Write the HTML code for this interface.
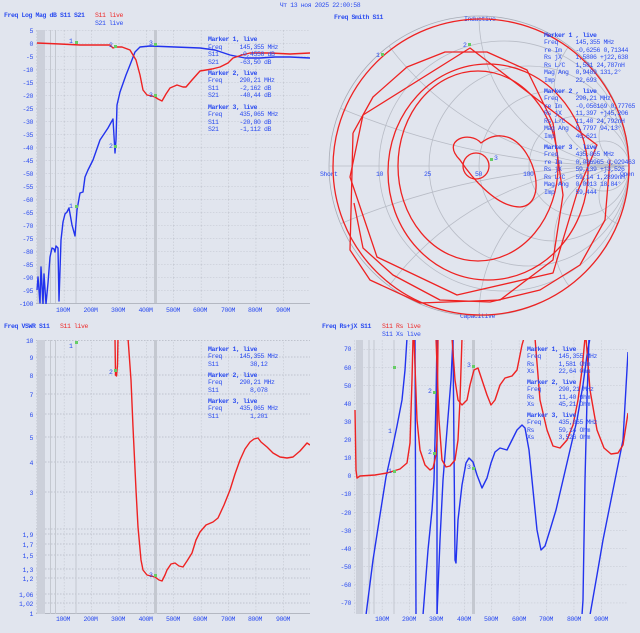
<!DOCTYPE html>
<html><head><meta charset="utf-8"><style>
html,body{margin:0;padding:0;background:#e1e5ee;overflow:hidden;width:640px;height:633px}
svg{display:block}
text{font-family:"Liberation Mono","DejaVu Sans Mono",monospace;font-size:6.5px;letter-spacing:-0.4px;fill:#2b4cf0;white-space:pre}
.b{font-weight:bold}
.r{fill:#ee2a2a}
.ax{text-anchor:end}
.fx{text-anchor:middle}
</style></head><body>
<svg width="640" height="633" viewBox="0 0 640 633" xmlns="http://www.w3.org/2000/svg">
<defs>
<pattern id="g1" patternUnits="userSpaceOnUse" x="36.5" y="30.5" width="27.4" height="13"><path d="M0 0H27.4M0 0V13" stroke="#b4b8c2" stroke-width="0.8" stroke-dasharray="1.5,1.5" fill="none"/></pattern>
<pattern id="gv" patternUnits="userSpaceOnUse" x="36.5" y="0" width="27.4" height="633"><path d="M0 0V633" stroke="#b4b8c2" stroke-width="0.8" stroke-dasharray="1.5,1.5"/></pattern>
<pattern id="g4" patternUnits="userSpaceOnUse" x="354.5" y="476" width="27.4" height="18.1"><path d="M0 0H27.4M0 0V18.1" stroke="#b4b8c2" stroke-width="0.8" stroke-dasharray="1.5,1.5" fill="none"/></pattern>
<clipPath id="c1"><rect x="36" y="30" width="274" height="274"/></clipPath>
<clipPath id="c3"><rect x="36" y="340" width="274" height="274"/></clipPath>
<clipPath id="c4"><rect x="354" y="340" width="274" height="274"/></clipPath>
<clipPath id="cs"><circle cx="479" cy="166" r="150"/></clipPath>
</defs>
<rect width="640" height="633" fill="#e1e5ee"/>
<text x="320" y="7" class="fx">Чт 13 ноя 2025 22:00:58</text>

<!-- PANEL 1 -->
<text x="4" y="17" class="b">Freq Log Mag dB S11 S21</text>
<text x="95" y="17" class="r">S11 live</text>
<text x="95" y="25">S21 live</text>
<rect x="36" y="30" width="274" height="274" fill="url(#g1)"/>
<rect x="37" y="30" width="8" height="274" fill="#ccd0da"/>
<g stroke="#c4c8d0" stroke-width="1"><path d="M50.5 30V304M55.5 30V304M76 30V304"/></g>
<rect x="154" y="30" width="3" height="274" fill="#c4c8d0"/>
<line x1="36" y1="303.5" x2="310" y2="303.5" stroke="#b4b8c2"/>
<text x="33" y="33" class="ax">5</text><text x="33" y="46" class="ax">0</text><text x="33" y="59" class="ax">-5</text><text x="33" y="72" class="ax">-10</text><text x="33" y="85" class="ax">-15</text><text x="33" y="98" class="ax">-20</text><text x="33" y="111" class="ax">-25</text><text x="33" y="124" class="ax">-30</text><text x="33" y="137" class="ax">-35</text><text x="33" y="150" class="ax">-40</text><text x="33" y="163" class="ax">-45</text><text x="33" y="176" class="ax">-50</text><text x="33" y="189" class="ax">-55</text><text x="33" y="202" class="ax">-60</text><text x="33" y="215" class="ax">-65</text><text x="33" y="228" class="ax">-70</text><text x="33" y="241" class="ax">-75</text><text x="33" y="254" class="ax">-80</text><text x="33" y="267" class="ax">-85</text><text x="33" y="280" class="ax">-90</text><text x="33" y="293" class="ax">-95</text><text x="33" y="306" class="ax">-100</text>
<text x="63" y="312" class="fx">100M</text><text x="90.5" y="312" class="fx">200M</text><text x="118" y="312" class="fx">300M</text><text x="145.5" y="312" class="fx">400M</text><text x="173" y="312" class="fx">500M</text><text x="200" y="312" class="fx">600M</text><text x="228" y="312" class="fx">700M</text><text x="255" y="312" class="fx">800M</text><text x="283" y="312" class="fx">900M</text>
<g clip-path="url(#c1)" fill="none" stroke-width="1.4" stroke-linejoin="round">
<polyline stroke="#2233ee" points="37,290 38,277 40,303 41,267 43,304 44,274 46,304 48,283 50,257 52,248 54,249 55,252 56,246 58,248 59,301 61,240 63,222 65,214 67,212 69,208 72,225 75,236 77,210 80,193 83,192 85,177 88,170 93,160 100,140 108,128 113,119 115,153 116,140 117,105 120,92 126,75 130,65 135,52 140,47 150,46 200,48 215,50 230,55 245,58 260,58 275,57 290,57 310,58"/>
<polyline stroke="#ee2222" points="37,43 60,44 80,45 110,45 113,48 116,47 122,47 130,50 136,60 140,75 143,90 147,95 152,96 155,97 158,99 162,101 166,94 170,88 177,85 183,87 186,87 192,80 200,71 212,69 220,67 228,63 233,58 242,55 250,53 270,53 290,54 310,53"/>
</g>
<g fill="#66cc66"><rect x="75" y="41" width="3" height="3"/><rect x="114" y="45" width="3" height="3"/><rect x="154" y="43" width="3" height="3"/><rect x="154" y="94" width="3" height="3"/><rect x="114" y="145" width="3" height="3"/><rect x="75" y="205" width="3" height="3"/></g>
<text x="69" y="43">1</text><text x="109" y="47">2</text><text x="149" y="45">3</text><text x="149" y="97">3</text><text x="109" y="148">2</text><text x="69" y="208">1</text>
<text x="208" y="41" class="b">Marker 1, live</text>
<text x="208" y="49">Freq     145,355 MHz</text>
<text x="208" y="56">S11      -0,4558 dB</text>
<text x="208" y="64">S21      -63,50 dB</text>
<text x="208" y="75" class="b">Marker 2, live</text>
<text x="208" y="82">Freq     290,21 MHz</text>
<text x="208" y="90">S11      -2,162 dB</text>
<text x="208" y="97">S21      -40,44 dB</text>
<text x="208" y="109" class="b">Marker 3, live</text>
<text x="208" y="116">Freq     435,065 MHz</text>
<text x="208" y="124">S11      -20,80 dB</text>
<text x="208" y="131">S21      -1,112 dB</text>

<!-- SMITH -->
<text x="334" y="19" class="b">Freq Smith S11</text>
<g fill="none" stroke="#b8bcc6" stroke-width="0.8">
<circle cx="479" cy="166" r="150" stroke="#a8acb6"/>
<line x1="329" y1="166" x2="629" y2="166"/>
<circle cx="504" cy="166" r="125"/><circle cx="529" cy="166" r="100"/><circle cx="554" cy="166" r="75"/><circle cx="579" cy="166" r="50"/><circle cx="604" cy="166" r="25"/>
<g clip-path="url(#cs)">
<circle cx="629" cy="-584" r="750"/><circle cx="629" cy="916" r="750"/>
<circle cx="629" cy="-134" r="300"/><circle cx="629" cy="466" r="300"/>
<circle cx="629" cy="16" r="150"/><circle cx="629" cy="316" r="150"/>
<circle cx="629" cy="91" r="75"/><circle cx="629" cy="241" r="75"/>
<circle cx="629" cy="136" r="30"/><circle cx="629" cy="196" r="30"/>
</g>
</g>
<text x="464" y="21">Inductive</text>
<text x="460" y="318">Capacitive</text>
<text x="320" y="176">Short</text>
<text x="376" y="176">10</text><text x="424" y="176">25</text><text x="475" y="176">50</text><text x="523" y="176">100</text><text x="620" y="176">Open</text>
<g fill="none" stroke="#ee2222" stroke-width="1.3" stroke-linejoin="round">
<circle cx="481" cy="167" r="148"/>
<ellipse cx="478" cy="166" rx="80" ry="95"/>
<ellipse cx="488" cy="172" rx="100" ry="108"/>
<polyline points="363,115 470,48 597,145 577,193 553,273 457,295 377,257 350,177 363,115"/>
<polyline points="353,133 373,97 407,67 445,52 487,52 527,70 553,123 563,195 553,260 500,300 420,303 370,280 350,250 353,133"/>
<polyline points="354,203 363,248 393,275 440,300 490,302 540,290 580,265 605,220 610,160"/>
<path d="M481 143 C470 130 440 140 460 160 C470 175 495 207 520 207 C548 205 536 150 510 138 C495 132 485 140 481 143 Z"/>
<circle cx="476" cy="166" r="13"/>
</g>
<g fill="#66cc66"><rect x="381" y="53" width="3" height="3"/><rect x="468" y="43" width="3" height="3"/><rect x="490" y="158" width="3" height="3"/></g>
<text x="376" y="57">1</text><text x="463" y="47">2</text><text x="494" y="160">3</text>
<text x="544" y="37" class="b">Marker 1 , live</text>
<text x="544" y="44">Freq     145,355 MHz</text>
<text x="544" y="52">re Im    -0,6256 0,71344</text>
<text x="544" y="59">Rs jX    1,5806 +j22,638</text>
<text x="544" y="67">Rs L/C   1,581 24,787nH</text>
<text x="544" y="74">Mag Ang  0,9489 131,2°</text>
<text x="544" y="82">Imp      22,693</text>
<text x="544" y="93" class="b">Marker 2 , live</text>
<text x="544" y="100">Freq     290,21 MHz</text>
<text x="544" y="108">re Im    -0,056169 0,77765</text>
<text x="544" y="115">Rs jX    11,397 +j45,206</text>
<text x="544" y="123">Rs L/C   11,40 24,792nH</text>
<text x="544" y="130">Mag Ang  0,7797 94,13°</text>
<text x="544" y="138">Imp      46,621</text>
<text x="544" y="149" class="b">Marker 3 , live</text>
<text x="544" y="156">Freq     435,065 MHz</text>
<text x="544" y="164">re Im    0,086965 0,029463</text>
<text x="544" y="171">Rs jX    59,139 +j3,526</text>
<text x="544" y="179">Rs L/C   59,14 1,2899nH</text>
<text x="544" y="186">Mag Ang  0,0913 18,84°</text>
<text x="544" y="194">Imp      59,444</text>

<!-- PANEL 3 VSWR -->
<text x="4" y="328" class="b">Freq VSWR S11</text>
<text x="60" y="328" class="r">S11 live</text>
<rect x="36" y="340" width="274" height="274" fill="url(#gv)"/>
<g stroke="#b4b8c2" stroke-width="0.8" stroke-dasharray="1.5,1.5"><path d="M36 340.5H310M36 357H310M36 375H310M36 394H310M36 414H310M36 437H310M36 462H310M36 492H310M36 529H310M36 534H310M36 544H310M36 555H310M36 569H310M36 578H310M36 594H310M36 603H310"/></g>
<line x1="36" y1="613.5" x2="310" y2="613.5" stroke="#b4b8c2"/>
<rect x="37" y="340" width="8" height="274" fill="#ccd0da"/>
<g stroke="#c4c8d0" stroke-width="1"><path d="M50.5 340V614M55.5 340V614M76 340V614"/></g>
<rect x="154" y="340" width="3" height="274" fill="#c4c8d0"/>
<text x="33" y="343" class="ax">10</text><text x="33" y="360" class="ax">9</text><text x="33" y="378" class="ax">8</text><text x="33" y="397" class="ax">7</text><text x="33" y="417" class="ax">6</text><text x="33" y="440" class="ax">5</text><text x="33" y="465" class="ax">4</text><text x="33" y="495" class="ax">3</text><text x="33" y="537" class="ax">1,9</text><text x="33" y="547" class="ax">1,7</text><text x="33" y="558" class="ax">1,5</text><text x="33" y="572" class="ax">1,3</text><text x="33" y="581" class="ax">1,2</text><text x="33" y="597" class="ax">1,06</text><text x="33" y="606" class="ax">1,02</text><text x="33" y="616" class="ax">1</text>
<text x="63" y="621" class="fx">100M</text><text x="90.5" y="621" class="fx">200M</text><text x="118" y="621" class="fx">300M</text><text x="145.5" y="621" class="fx">400M</text><text x="173" y="621" class="fx">500M</text><text x="200" y="621" class="fx">600M</text><text x="228" y="621" class="fx">700M</text><text x="255" y="621" class="fx">800M</text><text x="283" y="621" class="fx">900M</text>
<g clip-path="url(#c3)" fill="none" stroke="#ee2222" stroke-width="1.4" stroke-linejoin="round">
<polyline points="115,338 115.5,375 116.5,376 117.5,365 118,338"/>
<polyline points="128,338 131,380 133,427 136,490 138,527 141,560 143,570 147,575 155,577 159,580 162,581 165,575 167,570 171,564 175,563 179,566 183,567 187,561 192,553 196,540 200,532 206,525 213,522 218,518 224,505 230,490 235,474 240,460 245,449 250,442 254,439 258,438 261,442 267,447 273,453 280,457 287,458 293,457 300,451 307,443 310,445"/>
</g>
<g fill="#66cc66"><rect x="75" y="341" width="3" height="3"/><rect x="114" y="369" width="3" height="3"/><rect x="154" y="574" width="3" height="3"/></g>
<text x="69" y="348">1</text><text x="109" y="374">2</text><text x="149" y="577">3</text>
<text x="208" y="351" class="b">Marker 1, live</text>
<text x="208" y="358">Freq     145,355 MHz</text>
<text x="208" y="366">S11         38,12</text>
<text x="208" y="377" class="b">Marker 2, live</text>
<text x="208" y="384">Freq     290,21 MHz</text>
<text x="208" y="392">S11         8,078</text>
<text x="208" y="403" class="b">Marker 3, live</text>
<text x="208" y="410">Freq     435,065 MHz</text>
<text x="208" y="418">S11         1,201</text>

<!-- PANEL 4 Rs+jX -->
<text x="322" y="328" class="b">Freq Rs+jX S11</text>
<text x="382" y="328" class="r">S11 Rs live</text>
<text x="382" y="336">S11 Xs live</text>
<rect x="354" y="340" width="274" height="274" fill="url(#g4)"/>
<rect x="356" y="340" width="7" height="274" fill="#ccd0da"/>
<g stroke="#c4c8d0" stroke-width="1"><path d="M369 340V614M374 340V614M394 340V614"/></g>
<rect x="472" y="340" width="3" height="274" fill="#c4c8d0"/>
<text x="351" y="351" class="ax">70</text><text x="351" y="370" class="ax">60</text><text x="351" y="388" class="ax">50</text><text x="351" y="406" class="ax">40</text><text x="351" y="424" class="ax">30</text><text x="351" y="442" class="ax">20</text><text x="351" y="460" class="ax">10</text><text x="351" y="478" class="ax">0</text><text x="351" y="496" class="ax">-10</text><text x="351" y="515" class="ax">-20</text><text x="351" y="533" class="ax">-30</text><text x="351" y="551" class="ax">-40</text><text x="351" y="569" class="ax">-50</text><text x="351" y="587" class="ax">-60</text><text x="351" y="605" class="ax">-70</text>
<text x="382" y="621" class="fx">100M</text><text x="409" y="621" class="fx">200M</text><text x="436" y="621" class="fx">300M</text><text x="464" y="621" class="fx">400M</text><text x="491" y="621" class="fx">500M</text><text x="519" y="621" class="fx">600M</text><text x="546" y="621" class="fx">700M</text><text x="574" y="621" class="fx">800M</text><text x="601" y="621" class="fx">900M</text>
<g clip-path="url(#c4)" fill="none" stroke-width="1.4" stroke-linejoin="round">
<polyline stroke="#2233ee" points="366,615 373,560 380,515 386,477 392,450 397,426 402,400 405,370 407,338"/>
<polyline stroke="#2233ee" points="415,338 416,615"/>
<polyline stroke="#2233ee" points="423,615 428,550 432,510 434,480 436,400 437,338"/>
<polyline stroke="#2233ee" points="437,338 437,615"/>
<polyline stroke="#2233ee" points="437,615 440,540 443,480 447,430 451,380 453,338"/>
<polyline stroke="#2233ee" points="453,338 455,560 456,563 458,520 462,485 466,463 469,458 473,462 477,475 482,488 487,478 491,463 495,452 500,448 507,450 512,440 517,430 522,425 525,428 529,450 533,490 537,530 541,550 545,546 550,530 556,510 563,480 570,450 577,420 583,385 587,355 590,338"/>
<polyline stroke="#2233ee" points="582,615 583,600 585,480 587,400 589,338"/>
<polyline stroke="#2233ee" points="590,615 597,575 603,540 610,505 617,470 623,440 628,352"/>
<polyline stroke="#ee2222" points="355,410 356,470 357,478 360,476 375,475 387,473 400,469 407,463 410,443 412,380 413,338"/>
<polyline stroke="#ee2222" points="414,338 417,420 420,450 425,465 430,470 433,468 436,455 437,440 438,338"/>
<polyline stroke="#ee2222" points="436,338 439,420 442,460 446,467 450,466 455,460 458,440 460,400 462,338"/>
<polyline stroke="#ee2222" points="452,338 455,380 458,400 462,405 467,400 470,385 474,370 478,368 482,380 487,395 491,405 495,400 500,385 505,378 512,376 517,370 522,345 524,338"/>
<polyline stroke="#ee2222" points="535,338 540,400 547,430 553,446 560,448 567,440 573,425 578,400 582,370 585,338"/>
<polyline stroke="#ee2222" points="586,338 590,390 597,430 604,448 611,454 618,453 623,445 628,413"/>
</g>
<g fill="#66cc66"><rect x="393" y="366" width="3" height="3"/><rect x="393" y="470" width="3" height="3"/><rect x="433" y="391" width="3" height="3"/><rect x="433" y="452" width="3" height="3"/><rect x="472" y="365" width="3" height="3"/><rect x="472" y="467" width="3" height="3"/></g>
<text x="388" y="433">1</text><text x="388" y="473">1</text><text x="428" y="393">2</text><text x="428" y="454">2</text><text x="467" y="367">3</text><text x="467" y="469">3</text>
<text x="527" y="351" class="b">Marker 1, live</text>
<text x="527" y="358">Freq     145,355 MHz</text>
<text x="527" y="366">Rs       1,581 Ohm</text>
<text x="527" y="373">Xs       22,64 Ohm</text>
<text x="527" y="384" class="b">Marker 2, live</text>
<text x="527" y="391">Freq     290,21 MHz</text>
<text x="527" y="399">Rs       11,40 Ohm</text>
<text x="527" y="406">Xs       45,21 Ohm</text>
<text x="527" y="417" class="b">Marker 3, live</text>
<text x="527" y="424">Freq     435,065 MHz</text>
<text x="527" y="432">Rs       59,14 Ohm</text>
<text x="527" y="439">Xs       3,526 Ohm</text>
</svg>
</body></html>
